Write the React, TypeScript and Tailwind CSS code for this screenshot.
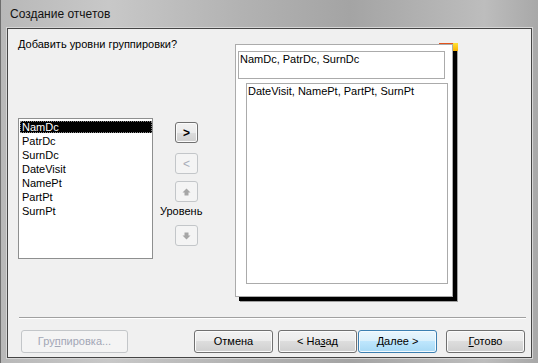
const items = ["NamDc", "PatrDc", "SurnDc", "DateVisit", "NamePt", "PartPt", "SurnPt"];

function Arrow({ up }: { up?: boolean }) {
  return (
    <svg width="9" height="8" viewBox="0 0 9 8" className={up ? "" : "rotate-180"}>
      <path d="M4.5 0.5 L8.5 4.5 L6.5 4.5 L6.5 7.5 L2.5 7.5 L2.5 4.5 L0.5 4.5 Z" fill="#a6a6a6" />
    </svg>
  );
}

function SmallBtn({ children, disabled }: { children: React.ReactNode; disabled?: boolean }) {
  return (
    <div
      className={
        disabled
          ? "ml-[15px] flex h-[21px] w-[23px] items-center justify-center rounded-[3px] border border-[#c3c6c9] bg-[#f4f4f4] text-[12px] text-[#a8acb8]"
          : "ml-[15px] flex h-[21px] w-[23px] items-center justify-center rounded-[3px] border border-[#707070] bg-[linear-gradient(#f2f2f2,#ebebeb_50%,#dddddd_50%,#cfcfcf)] text-[12px] font-bold text-black shadow-[inset_0_0_0_1px_#fbfbfb]"
      }
    >
      {children}
    </div>
  );
}

export default function App() {
  return (
    <div className="flex h-[363px] w-[538px] flex-col overflow-hidden border-l border-[#6e6e6e] bg-[linear-gradient(90deg,#b8b8b8,#c8c8c8_20%,#b2b2b2_45%,#a4a4a4_65%,#bdbdbd_90%,#a8a8a8)] font-['Liberation_Sans',Arial,sans-serif] text-black">
      <div className="flex h-[28px] items-center pl-[9px] text-[12px] leading-[14px] text-[#111]">Создание отчетов</div>

      <div className="mb-[5px] ml-[6px] mr-[6px] flex flex-1 flex-col border border-[#454545] bg-[#f0f0f0] shadow-[0_0_0_1px_#d6d6d6]">
        <div className="flex h-[288px] pl-[10px]">
          <div className="flex w-[217px] flex-col pt-[8px]">
            <div className="h-[14px] whitespace-nowrap text-[11px] leading-[14px]">Добавить уровни группировки?</div>
            <div className="mt-[67px] flex">
              <div className="h-[141px] w-[135px] border border-[#8e8f8f] bg-white pt-[1px]">
                {items.map((t, i) => (
                  <div key={t} className="flex h-[14px] items-center pl-[1px]">
                    <div
                      className={
                        i === 0
                          ? "h-[12px] w-full border border-dotted border-[#888] bg-black pl-[1px] text-[11px] leading-[10px] text-white"
                          : "h-[12px] w-full pl-[2px] text-[11px] leading-[12px]"
                      }
                    >
                      {t}
                    </div>
                  </div>
                ))}
              </div>
              <div className="ml-[7px] flex w-[46px] flex-col">
                <div className="mt-[4px]">
                  <SmallBtn>&gt;</SmallBtn>
                </div>
                <div className="mt-[10px]">
                  <SmallBtn disabled>&lt;</SmallBtn>
                </div>
                <div className="mt-[7px]">
                  <SmallBtn disabled>
                    <Arrow up />
                  </SmallBtn>
                </div>
                <div className="mt-[2px] h-[14px] whitespace-nowrap text-[11px] leading-[14px]">Уровень</div>
                <div className="mt-[7px]">
                  <SmallBtn disabled>
                    <Arrow />
                  </SmallBtn>
                </div>
              </div>
            </div>
          </div>

          <div className="relative mt-[15px] h-[253px] w-[218px] border border-[#ababab] bg-white shadow-[4px_4px_0_0_#000,5px_5px_0_0_#a0a0a0]">
            <div className="ml-[2px] mt-[6px] h-[28px] w-[207px] border border-[#ababab] pl-[1px] text-[11px] leading-[14px]">
              NamDc, PatrDc, SurnDc
            </div>
            <div className="ml-[10px] mt-[4px] h-[201px] w-[202px] border border-[#ababab] pl-[1px] text-[11px] leading-[14px]">
              DateVisit, NamePt, PartPt, SurnPt
            </div>
            <div className="absolute left-[203px] top-[-2px] h-[1px] w-[14px] bg-[#e2521c]" />
            <div className="absolute left-[217px] top-[-2px] h-[8px] w-[5px] bg-[linear-gradient(#ffe236,#f9b100)]" />
          </div>
        </div>

        <div className="ml-[11px] mr-[5px] h-[2px] border-b border-t border-b-white border-t-[#a0a0a0]" />

        <div className="mt-[11px] flex h-[23px] text-[11px]">
          <div className="ml-[13px] flex w-[107px] items-center justify-center rounded-[3px] border border-[#c3c6c9] bg-[#f4f4f4] text-[#a3a7b6]">
            <span>
              Гру<span className="underline">п</span>пировка...
            </span>
          </div>
          <div className="ml-[66px] flex w-[79px] items-center justify-center rounded-[3px] border border-[#707070] bg-[linear-gradient(#f2f2f2,#ebebeb_50%,#dddddd_50%,#cfcfcf)] shadow-[inset_0_0_0_1px_#fbfbfb]">
            Отмена
          </div>
          <div className="ml-[5px] flex w-[79px] items-center justify-center rounded-[3px] border border-[#707070] bg-[linear-gradient(#f2f2f2,#ebebeb_50%,#dddddd_50%,#cfcfcf)] shadow-[inset_0_0_0_1px_#fbfbfb]">
            <span>
              &lt; На<span className="underline">з</span>ад
            </span>
          </div>
          <div className="ml-[1px] flex w-[79px] items-center justify-center rounded-[3px] border border-[#3c7fb1] bg-[linear-gradient(#eaf6fd,#d9f0fc_50%,#bee6fd_50%,#a7d9f5)] shadow-[inset_0_0_0_1px_#f4fbff]">
            <span>
              <span className="underline">Д</span>алее &gt;
            </span>
          </div>
          <div className="ml-[9px] flex w-[79px] items-center justify-center rounded-[3px] border border-[#707070] bg-[linear-gradient(#f2f2f2,#ebebeb_50%,#dddddd_50%,#cfcfcf)] shadow-[inset_0_0_0_1px_#fbfbfb]">
            <span>
              <span className="underline">Г</span>отово
            </span>
          </div>
        </div>
      </div>
    </div>
  );
}
